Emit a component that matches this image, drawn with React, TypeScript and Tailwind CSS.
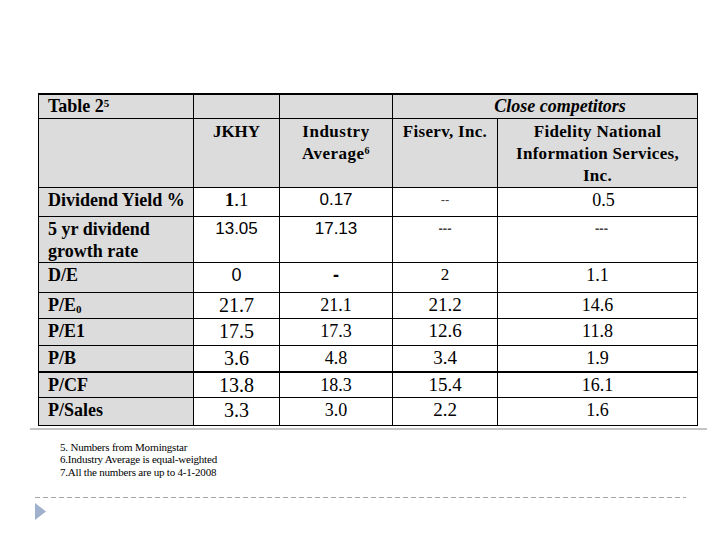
import React from "react";

const serif = "font-['Liberation_Serif','Times_New_Roman',serif]";
const sans = "font-['Liberation_Sans',Arial,sans-serif]";

type Cell = { text: React.ReactNode; cls?: string };

const rows: { label: React.ReactNode; h: string; cells: Cell[]; thickTop?: boolean }[] = [
  {
    label: "Dividend Yield %",
    h: "h-[29px]",
    cells: [
      { text: <><b>1</b>.1</>, cls: `${serif} text-[19px]` },
      { text: "0.17", cls: `${sans} text-[17px]` },
      { text: "--", cls: `${sans} text-[13px] text-[#444]` },
      { text: "0.5", cls: `${serif} text-[18px] pl-[12px]` },
    ],
  },
  {
    label: <>5 yr dividend<br />growth rate</>,
    h: "h-[45px]",
    cells: [
      { text: "13.05", cls: `${sans} text-[17px]` },
      { text: "17.13", cls: `${sans} text-[17px]` },
      { text: "---", cls: `${sans} text-[13px] font-bold text-[#444]` },
      { text: "---", cls: `${sans} text-[13px] font-bold pl-[8px] text-[#444]` },
    ],
  },
  {
    label: "D/E",
    h: "h-[30px]",
    cells: [
      { text: "0", cls: `${sans} text-[18px]` },
      { text: "-", cls: `${sans} text-[18px] font-bold` },
      { text: "2", cls: `${serif} text-[17px]` },
      { text: "1.1", cls: `${serif} text-[18px]` },
    ],
  },
  {
    label: <>P/E<sub className="text-[11px]">0</sub></>,
    h: "h-[26px]",
    cells: [
      { text: "21.7", cls: `${serif} text-[20px]` },
      { text: "21.1", cls: `${serif} text-[18px]` },
      { text: "21.2", cls: `${serif} text-[19px]` },
      { text: "14.6", cls: `${serif} text-[18px]` },
    ],
  },
  {
    label: "P/E1",
    h: "h-[27px]",
    cells: [
      { text: "17.5", cls: `${serif} text-[20px]` },
      { text: "17.3", cls: `${serif} text-[18px]` },
      { text: "12.6", cls: `${serif} text-[19px]` },
      { text: "11.8", cls: `${serif} text-[18px]` },
    ],
  },
  {
    label: "P/B",
    h: "h-[27px]",
    cells: [
      { text: "3.6", cls: `${serif} text-[20px]` },
      { text: "4.8", cls: `${serif} text-[18px]` },
      { text: "3.4", cls: `${serif} text-[19px]` },
      { text: "1.9", cls: `${serif} text-[18px]` },
    ],
  },
  {
    label: "P/CF",
    h: "h-[25px]",
    thickTop: true,
    cells: [
      { text: "13.8", cls: `${serif} text-[20px]` },
      { text: "18.3", cls: `${serif} text-[18px]` },
      { text: "15.4", cls: `${serif} text-[19px]` },
      { text: "16.1", cls: `${serif} text-[18px]` },
    ],
  },
  {
    label: "P/Sales",
    h: "h-[28px]",
    cells: [
      { text: "3.3", cls: `${serif} text-[20px]` },
      { text: "3.0", cls: `${serif} text-[18px]` },
      { text: "2.2", cls: `${serif} text-[19px]` },
      { text: "1.6", cls: `${serif} text-[18px]` },
    ],
  },
];

export default function App() {
  const gray = "bg-[#dcdcdc]";
  const bd = "border border-black";

  return (
    <div className="w-[720px] h-[540px] bg-white overflow-hidden text-black">
      <div className="pt-[93px] pl-[38px]">
        <table className={`table-fixed border-collapse w-[659px] border-t-2 border-black ${serif}`}>
          <colgroup>
            <col className="w-[155px]" />
            <col className="w-[86px]" />
            <col className="w-[113px]" />
            <col className="w-[105px]" />
            <col className="w-[200px]" />
          </colgroup>
          <tbody>
            <tr className="h-[24px]">
              <td className={`${bd} border-t-2 ${gray} pl-[9px] align-top text-[18px] font-bold leading-[22px] whitespace-nowrap`}>
                Table 2<sup className="text-[11px]">5</sup>
              </td>
              <td className={`${bd} border-t-2 ${gray}`} />
              <td className={`${bd} border-t-2 ${gray}`} />
              <td colSpan={2} className={`${bd} border-t-2 ${gray} text-center align-top text-[18px] font-bold italic leading-[22px] pl-[30px]`}>
                Close competitors
              </td>
            </tr>
            <tr className="h-[68px]">
              <td className={`${bd} ${gray}`} />
              <td className={`${bd} ${gray} text-center align-top pt-[2px] text-[17px] font-bold leading-[22px]`}>JKHY</td>
              <td className={`${bd} ${gray} text-center align-top pt-[2px] text-[17px] font-bold leading-[22px] tracking-[0.5px]`}>
                Industry<br />Average<sup className="text-[10px]">6</sup>
              </td>
              <td className={`${bd} ${gray} text-center align-top pt-[2px] text-[17px] font-bold leading-[22px] tracking-[0.3px]`}>Fiserv, Inc.</td>
              <td className={`${bd} ${gray} text-center align-top pt-[2px] text-[17px] font-bold leading-[22px] tracking-[0.3px]`}>
                Fidelity National<br />Information Services,<br />Inc.
              </td>
            </tr>
            {rows.map((r, i) => (
              <tr key={i} className={r.h}>
                <td className={`${bd} ${r.thickTop ? "border-t-2" : ""} ${gray} pl-[9px] align-top pt-[1px] text-[18px] font-bold leading-[22px] whitespace-nowrap`}>
                  {r.label}
                </td>
                {r.cells.map((c, j) => (
                  <td
                    key={j}
                    className={`${bd} ${r.thickTop ? "border-t-2" : ""} bg-white text-center align-top pt-[1px] leading-[22px] ${c.cls ?? ""}`}
                  >
                    {c.text}
                  </td>
                ))}
              </tr>
            ))}
          </tbody>
        </table>
      </div>

      <div className="ml-[30px] mt-[2px] w-[677px] h-[2px] bg-[#c4c4c4]" />

      <div className={`ml-[60px] mt-[11px] ${serif} text-[11px] leading-[12.5px] tracking-[-0.2px]`}>
        <div>5. Numbers from Morningstar</div>
        <div>6.Industry Average is equal-weighted</div>
        <div>7.All the numbers are up to 4-1-2008</div>
      </div>

      <div className="ml-[35px] mt-[19px] w-[651px] h-[1px] bg-[linear-gradient(to_right,#a8a8a8_65%,transparent_0)] bg-[length:8px_1px]" />

      <div className="ml-[35px] mt-[5px]">
        <svg width="11" height="17" viewBox="0 0 11 17">
          <polygon points="0,0 11,8.5 0,17" fill="#9fb1cc" />
        </svg>
      </div>
    </div>
  );
}
